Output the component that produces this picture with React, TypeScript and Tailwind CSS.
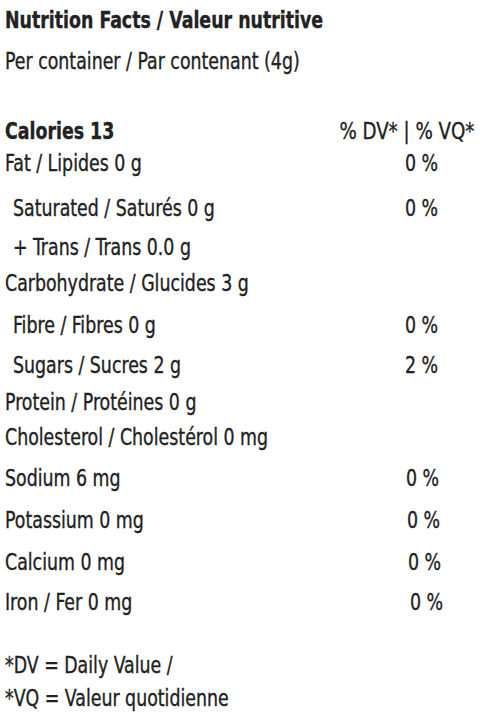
const rows: { label: string; dv?: string; indent?: boolean; mt: string; dvPad?: string }[] = [
  { label: "Fat / Lipides 0 g", dv: "0 %", mt: "mt-[2px]" },
  { label: "Saturated / Saturés 0 g", dv: "0 %", indent: true, mt: "mt-[15px]" },
  { label: "+ Trans / Trans 0.0 g", indent: true, mt: "mt-[9px]" },
  { label: "Carbohydrate / Glucides 3 g", mt: "mt-[6px]" },
  { label: "Fibre / Fibres 0 g", dv: "0 %", indent: true, mt: "mt-[12px]" },
  { label: "Sugars / Sucres 2 g", dv: "2 %", indent: true, mt: "mt-[10px]" },
  { label: "Protein / Protéines 0 g", mt: "mt-[7px]" },
  { label: "Cholesterol / Cholestérol 0 mg", mt: "mt-[5px]" },
  { label: "Sodium 6 mg", dv: "0 %", mt: "mt-[11px]", dvPad: "pl-[1px]" },
  { label: "Potassium 0 mg", dv: "0 %", mt: "mt-[12px]", dvPad: "pl-[2px]" },
  { label: "Calcium 0 mg", dv: "0 %", mt: "mt-[12px]", dvPad: "pl-[3px]" },
  { label: "Iron / Fer 0 mg", dv: "0 %", mt: "mt-[10px]", dvPad: "pl-[5px]" },
];

// condensed look: DejaVu Sans Condensed squeezed a bit more
function Txt({ children, right }: { children: React.ReactNode; right?: boolean }) {
  return (
    <span className={`inline-block whitespace-nowrap scale-x-[0.84] ${right ? "origin-right" : "origin-left"}`}>
      {children}
    </span>
  );
}

export default function App() {
  return (
    <div
      className="w-[480px] h-[718px] bg-white text-[#222] px-[5px] pt-[5px] text-[23px] leading-[30px] overflow-hidden [-webkit-text-stroke:0.35px_#222]"
      style={{ fontFamily: '"DejaVu Sans Condensed", "Liberation Sans", sans-serif' }}
    >
      <div className="h-[30px] font-bold">
        <Txt>Nutrition Facts / Valeur nutritive</Txt>
      </div>
      <div className="h-[30px] mt-[11px]">
        <Txt>Per container / Par contenant (4g)</Txt>
      </div>

      <div className="h-[30px] mt-[40px] flex justify-between">
        <span className="font-bold">
          <Txt>Calories 13</Txt>
        </span>
        <span className="pr-[1px]">
          <span className="inline-block whitespace-nowrap scale-x-[0.88] origin-right">% DV* | % VQ*</span>
        </span>
      </div>

      {rows.map((r) => (
        <div key={r.label} className={`h-[30px] flex ${r.mt}`}>
          <span className={`w-[400px] ${r.indent ? "pl-[8px]" : ""}`}>
            <Txt>{r.label}</Txt>
          </span>
          {r.dv && (
            <span className={r.dvPad ?? ""}>
              <Txt>{r.dv}</Txt>
            </span>
          )}
        </div>
      ))}

      <div className="h-[30px] mt-[33px]">
        <Txt>*DV = Daily Value /</Txt>
      </div>
      <div className="h-[30px] mt-[3px]">
        <Txt>*VQ = Valeur quotidienne</Txt>
      </div>
    </div>
  );
}
